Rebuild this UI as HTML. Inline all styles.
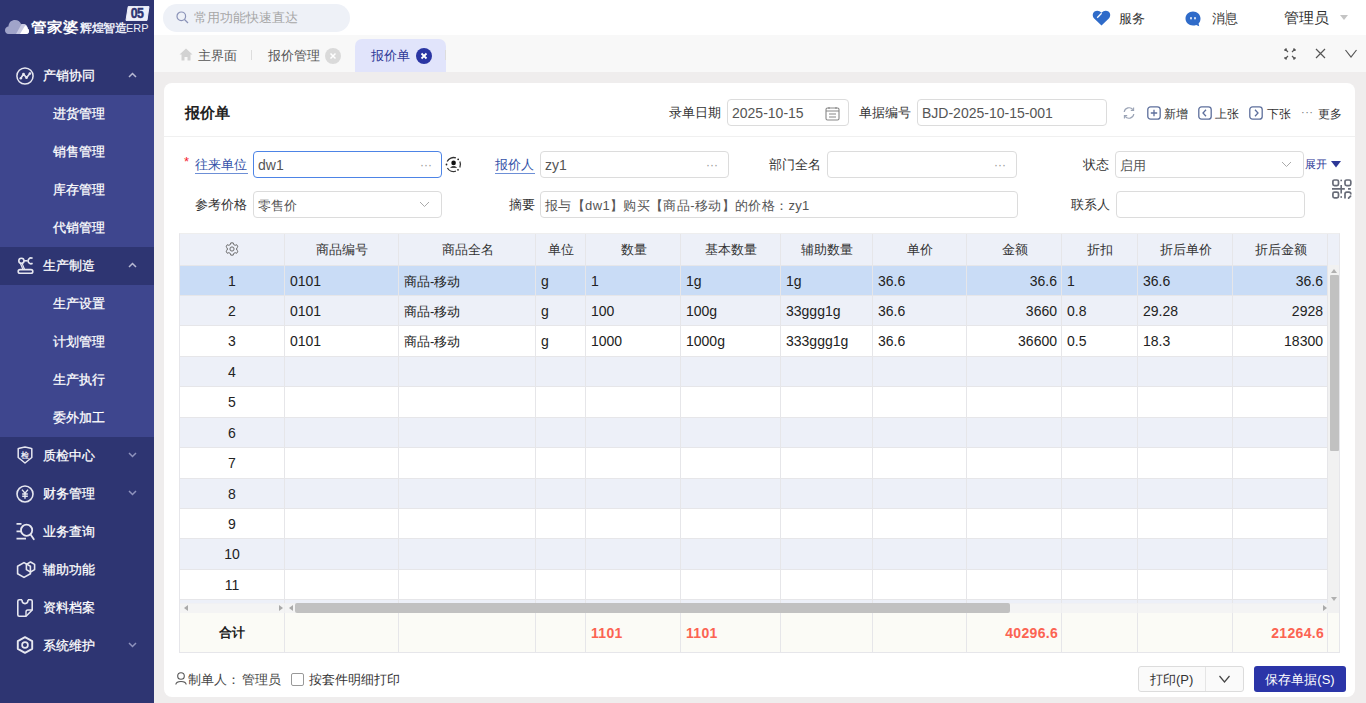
<!DOCTYPE html>
<html><head><meta charset="utf-8">
<style>
*{box-sizing:border-box;margin:0;padding:0}
html,body{width:1366px;height:703px;overflow:hidden}
body{position:relative;background:#efeded;font-family:"Liberation Sans",sans-serif;color:#333;font-size:13px}
.a{position:absolute}
#side{position:absolute;left:0;top:0;width:154px;height:703px;background:#2e3572}
.mh{position:absolute;left:0;width:154px;height:38px;color:#fff;font-size:13px;line-height:38px;-webkit-text-stroke:0.25px #fff}
.mh .t{position:absolute;left:43px;top:0}
.mh .ic{position:absolute;left:16px;top:10px;width:18px;height:18px}
.mh .ch{position:absolute;left:128px;top:15px;width:9px;height:6px}
.sub{position:absolute;left:0;width:154px;background:#3e468e}
.si{position:absolute;left:53px;width:80px;height:38px;line-height:38px;color:#fff;font-size:13px;-webkit-text-stroke:0.25px #fff}
#top{position:absolute;left:154px;top:0;width:1212px;height:35px;background:#fff}
#tabs{position:absolute;left:154px;top:35px;width:1212px;height:37px;background:#f8f8f8}
#card{position:absolute;left:164px;top:83px;width:1191px;height:614px;background:#fff;border-radius:8px}
.lbl{position:absolute;font-size:13px;color:#333;height:27px;line-height:27px;white-space:nowrap}
.inp{position:absolute;height:27px;border:1px solid #dcdcdc;border-radius:4px;background:#fff;font-size:14px;color:#555;line-height:27px;padding-left:4px;white-space:nowrap}
.dots{position:absolute;right:10px;top:0;color:#999;font-size:12px;letter-spacing:0px}
.thead{position:absolute;background:#edf0f8}
.rowbg{position:absolute}
.hl{position:absolute;height:1px;background:#e6e6e9}
.vl{position:absolute;width:1px;background:#e6e6e9}
.th{position:absolute;text-align:center;line-height:34px;font-size:13px;color:#333}
.td{position:absolute;line-height:31px;font-size:14px;color:#222;padding-left:5px;white-space:nowrap}
.td.c{text-align:center;padding-left:0}
.td.r{text-align:right;padding-right:5px;padding-left:0}
.td.cn{font-size:13px}
.tot{position:absolute;top:613px;height:39px;line-height:40px;font-weight:bold;color:#fb6352;font-size:14px;letter-spacing:0.3px}
</style></head><body>

<div id="side">
  <!-- logo -->
  <svg class="a" style="left:5px;top:19px" width="24" height="15" viewBox="0 0 24 15">
    <path d="M3.5 15 C1.2 15 0 13.3 0 11.3 C0 9 1.6 7.6 3.4 7.4 C3.8 3.2 6.6 1 10 1 C12.8 1 15.2 2.6 16.2 5.2 C16.8 5 17.4 4.9 18 4.9 C20.8 4.9 22.6 7 22.6 9.4 C23.5 10 24 11 24 12.2 C24 13.8 22.8 15 21 15 Z" fill="#a0a4c9"/>
    <path d="M11 15 L16.6 5.1 C17 5 17.5 4.9 18 4.9 C20.8 4.9 22.6 7 22.6 9.4 C23.5 10 24 11 24 12.2 C24 13.8 22.8 15 21 15 Z" fill="#c9cbe2"/>
    <path d="M15 15 L20.3 6.2 C21.7 7 22.6 8.2 22.6 9.4 C23.5 10 24 11 24 12.2 C24 13.8 22.8 15 21 15 Z" fill="#ffffff"/>
  </svg>
  <div class="a" style="left:31px;top:16.5px;color:#fff;font-size:15.5px;font-weight:bold;line-height:20px;transform:scaleY(0.9);transform-origin:center">管家婆</div>
  <div class="a" style="left:80px;top:21px;color:#eceef8;font-size:11.5px;font-weight:bold;line-height:14px;letter-spacing:-0.3px">辉煌智造</div>
  <div class="a" style="left:126px;top:21px;color:#eceef8;font-size:11.5px;line-height:14px;letter-spacing:0px;transform:scaleX(0.95);transform-origin:left">ERP</div>
  <svg class="a" style="left:125px;top:6px" width="25" height="15" viewBox="0 0 25 15"><path d="M3.2 0.6 H24 L22 14.4 H1 Z" fill="#eef0fa" stroke="#eef0fa" stroke-width="1" stroke-linejoin="round"/></svg>
  <div class="a" style="left:128px;top:5px;width:18px;height:16px;color:#2e3572;font-size:14px;font-weight:bold;line-height:16px;text-align:center;letter-spacing:-0.6px;transform:scaleX(0.88);-webkit-text-stroke:0.5px #2e3572">05</div>

  <div class="mh" style="top:57px">
    <svg class="ic" viewBox="0 0 18 18" style="left:16px;top:10px;width:18px;height:18px"><circle cx="9" cy="9" r="8.1" fill="none" stroke="#e6e7f0" stroke-width="1.5"/><path d="M4.8 11.2 L7.5 7 L10.5 10.8 L13.9 6.5" fill="none" stroke="#e6e7f0" stroke-width="1.6" stroke-linejoin="round" stroke-linecap="round"/><circle cx="4.8" cy="11.2" r="1.3" fill="#e6e7f0"/><circle cx="7.5" cy="7" r="1.3" fill="#e6e7f0"/><circle cx="10.5" cy="10.8" r="1.3" fill="#e6e7f0"/><circle cx="13.9" cy="6.5" r="1.3" fill="#e6e7f0"/></svg>
    <span class="t">产销协同</span>
    <svg class="ch" viewBox="0 0 9 6"><path d="M1 5 L4.5 1.5 L8 5" fill="none" stroke="#b7b9d2" stroke-width="1.5"/></svg>
  </div>
  <div class="sub" style="top:95px;height:152px">
    <div class="si" style="top:0">进货管理</div>
    <div class="si" style="top:38px">销售管理</div>
    <div class="si" style="top:76px">库存管理</div>
    <div class="si" style="top:114px">代销管理</div>
  </div>
  <div class="mh" style="top:247px">
    <svg class="ic" viewBox="0 0 17 17" style="left:17px;top:10px;width:17px;height:17px"><circle cx="4.4" cy="3.8" r="2.6" fill="none" stroke="#e6e7f0" stroke-width="1.6"/><path d="M7 3.8 H10.5" stroke="#e6e7f0" stroke-width="1.6"/><path d="M15.6 1.4 A2.9 2.9 0 1 0 15.6 6.3" fill="none" stroke="#e6e7f0" stroke-width="1.6"/><path d="M5 6.3 L7.6 12.6 M3.4 6.6 L6 12.6" stroke="#e6e7f0" stroke-width="1.2"/><rect x="1.2" y="12.6" width="14.6" height="3.6" rx="1.8" fill="none" stroke="#e6e7f0" stroke-width="1.6"/></svg>
    <span class="t">生产制造</span>
    <svg class="ch" viewBox="0 0 9 6"><path d="M1 5 L4.5 1.5 L8 5" fill="none" stroke="#b7b9d2" stroke-width="1.5"/></svg>
  </div>
  <div class="sub" style="top:285px;height:152px">
    <div class="si" style="top:0">生产设置</div>
    <div class="si" style="top:38px">计划管理</div>
    <div class="si" style="top:76px">生产执行</div>
    <div class="si" style="top:114px">委外加工</div>
  </div>
  <div class="mh" style="top:437px">
    <svg class="ic" viewBox="0 0 18 18" style="left:16px;top:9px;width:18px;height:18px"><path d="M2.2 2.6 C5 1.8 6.8 1.2 9 1 C11.2 1.2 13 1.8 15.8 2.6 V11.5 L9 17 L2.2 11.5 Z" fill="none" stroke="#e6e7f0" stroke-width="1.5" stroke-linejoin="round"/><text x="9" y="11.6" font-size="7.5" text-anchor="middle" fill="#e6e7f0" font-weight="bold">检</text></svg>
    <span class="t">质检中心</span>
    <svg class="ch" viewBox="0 0 9 6"><path d="M1 1 L4.5 4.5 L8 1" fill="none" stroke="#8f93bd" stroke-width="1.5"/></svg>
  </div>
  <div class="mh" style="top:475px">
    <svg class="ic" viewBox="0 0 18 18" style="left:16px;top:10px;width:18px;height:18px"><circle cx="9" cy="9" r="8" fill="none" stroke="#e6e7f0" stroke-width="1.6"/><path d="M6 4.6 L9 8.2 L12 4.6 M9 8.2 V13.8 M6.2 9 H11.8 M6.2 11.3 H11.8" fill="none" stroke="#e6e7f0" stroke-width="1.4"/></svg>
    <span class="t">财务管理</span>
    <svg class="ch" viewBox="0 0 9 6"><path d="M1 1 L4.5 4.5 L8 1" fill="none" stroke="#8f93bd" stroke-width="1.5"/></svg>
  </div>
  <div class="mh" style="top:513px">
    <svg class="ic" viewBox="0 0 19 19" style="left:16px;top:9px;width:19px;height:19px"><path d="M0.5 1.8 H5.5 M0.5 9.3 H5 M0.5 16.6 H10" stroke="#e6e7f0" stroke-width="1.7"/><circle cx="10.6" cy="8.2" r="5.6" fill="none" stroke="#e6e7f0" stroke-width="1.8"/><path d="M14.6 12.4 L17.8 17.2" stroke="#e6e7f0" stroke-width="1.8" stroke-linecap="round"/></svg>
    <span class="t">业务查询</span>
  </div>
  <div class="mh" style="top:551px">
    <svg class="ic" viewBox="0 0 20 18" style="left:16px;top:10px;width:20px;height:18px"><path d="M8 1.6 L14.4 5.3 V12.7 L8 16.4 L1.6 12.7 V5.3 Z" fill="none" stroke="#e6e7f0" stroke-width="1.6" stroke-linejoin="round"/><path d="M14.5 1 L18.6 3.4 V8.6 L14.5 11 L10.4 8.6 V3.4 Z" fill="none" stroke="#e6e7f0" stroke-width="1.6" stroke-linejoin="round"/></svg>
    <span class="t">辅助功能</span>
  </div>
  <div class="mh" style="top:589px">
    <svg class="ic" viewBox="0 0 17 18" style="left:17px;top:10px;width:17px;height:18px"><path d="M5 0.8 H2.2 C1.4 0.8 0.8 1.4 0.8 2.2 V15.8 C0.8 16.6 1.4 17.2 2.2 17.2 H9 L15.2 11 V2.2 C15.2 1.4 14.6 0.8 13.8 0.8 H11" fill="none" stroke="#e6e7f0" stroke-width="1.6" stroke-linejoin="round"/><path d="M5 0.8 C5 3.5 6.3 4.6 8 4.6 C9.7 4.6 11 3.5 11 0.8" fill="none" stroke="#e6e7f0" stroke-width="1.6"/><path d="M9 17.2 V13 C9 12.2 9.6 11 10.8 11 H15.2" fill="none" stroke="#e6e7f0" stroke-width="1.4"/></svg>
    <span class="t">资料档案</span>
  </div>
  <div class="mh" style="top:627px">
    <svg class="ic" viewBox="0 0 18 18" style="left:16px;top:9px;width:18px;height:18px"><path d="M9 1.2 L16.2 5.2 V12.8 L9 16.8 L1.8 12.8 V5.2 Z" fill="none" stroke="#e6e7f0" stroke-width="1.9" stroke-linejoin="round"/><circle cx="9" cy="9" r="2.9" fill="none" stroke="#e6e7f0" stroke-width="1.7"/></svg>
    <span class="t">系统维护</span>
    <svg class="ch" viewBox="0 0 9 6"><path d="M1 1 L4.5 4.5 L8 1" fill="none" stroke="#8f93bd" stroke-width="1.5"/></svg>
  </div>
</div>

<div id="top">
  <div class="a" style="left:9px;top:4px;width:187px;height:28px;border-radius:14px;background:#eef1f7"></div>
  <svg class="a" style="left:22px;top:11px" width="13" height="13" viewBox="0 0 13 13"><circle cx="5.3" cy="5.3" r="4.3" fill="none" stroke="#8b93b8" stroke-width="1.2"/><path d="M8.5 8.5 L12 12" stroke="#8b93b8" stroke-width="1.3"/></svg>
  <div class="a" style="left:40px;top:9px;font-size:13px;color:#a7a7a7;line-height:18px">常用功能快速直达</div>
  <svg class="a" style="left:938px;top:10px" width="19" height="16" viewBox="0 0 19 16"><path d="M9.5 15.5 L2.2 8.6 C0.2 6.6 0.3 3.2 2.5 1.6 C4.8 0 7.6 0.6 9.5 2.8 C11.4 0.6 14.2 0 16.5 1.6 C18.7 3.2 18.8 6.6 16.8 8.6 Z" fill="#2f6bc9"/><path d="M5.2 7.8 L9.6 3.2" stroke="#fff" stroke-width="1.3"/></svg>
  <div class="a" style="left:965px;top:10px;font-size:13px;color:#333;line-height:18px">服务</div>
  <svg class="a" style="left:1031px;top:11px" width="16" height="16" viewBox="0 0 16 16"><path d="M8 0.5 C12.2 0.5 15.5 3.6 15.5 7.5 C15.5 9.6 14.8 11.4 13.6 12.6 L14.2 15.3 L11.2 14 C10.2 14.4 9.1 14.5 8 14.5 C3.8 14.5 0.5 11.4 0.5 7.5 C0.5 3.6 3.8 0.5 8 0.5 Z" fill="#2f6bc9"/><rect x="5.2" y="6" width="1.6" height="2.6" rx=".8" fill="#fff"/><rect x="9.2" y="6" width="1.6" height="2.6" rx=".8" fill="#fff"/></svg>
  <div class="a" style="left:1058px;top:10px;font-size:13px;color:#333;line-height:18px">消息</div>
  <div class="a" style="left:1072px;top:10px;width:1px;height:16px;background:#aaa"></div>
  <div class="a" style="left:1130px;top:8px;font-size:15px;color:#333;line-height:20px">管理员</div>
  <svg class="a" style="left:1186px;top:15px" width="8" height="5" viewBox="0 0 8 5"><path d="M0 0 H8 L4 5 Z" fill="#c4c4c4"/></svg>
</div>

<div id="tabs">
  <svg class="a" style="left:25px;top:13px" width="14" height="13" viewBox="0 0 14 13"><path d="M7 0.5 L0.5 6.5 H2.5 V12.5 H5.5 V9 H8.5 V12.5 H11.5 V6.5 H13.5 Z" fill="#d2d2d2"/></svg>
  <div class="a" style="left:44px;top:11px;font-size:13px;color:#555;line-height:19px">主界面</div>
  <div class="a" style="left:97px;top:15px;width:1px;height:10px;background:#ddd"></div>
  <div class="a" style="left:114px;top:11px;font-size:13px;color:#555;line-height:19px">报价管理</div>
  <svg class="a" style="left:171px;top:13px" width="16" height="16" viewBox="0 0 16 16"><circle cx="8" cy="8" r="8" fill="#dadada"/><path d="M5.5 5.5 L10.5 10.5 M10.5 5.5 L5.5 10.5" stroke="#fff" stroke-width="1.5"/></svg>
  <div class="a" style="left:201px;top:15px;width:1px;height:10px;background:#ddd"></div>
  <div class="a" style="left:201px;top:4px;width:91px;height:33px;background:#e1e4fb;border-radius:7px 7px 0 0"></div>
  <div class="a" style="left:217px;top:11px;font-size:13px;color:#2c3796;line-height:19px">报价单</div>
  <svg class="a" style="left:262px;top:13px" width="16" height="16" viewBox="0 0 16 16"><circle cx="8" cy="8" r="8" fill="#2a35a3"/><path d="M5.5 5.5 L10.5 10.5 M10.5 5.5 L5.5 10.5" stroke="#fff" stroke-width="1.8"/></svg>
  <div class="a" style="left:291px;top:15px;width:1px;height:10px;background:#ddd"></div>
  <svg class="a" style="left:1130px;top:13px" width="12" height="12" viewBox="0 0 12 12"><path d="M1 1 L4 4 M1 1 V3 M1 1 H3 M11 1 L8 4 M11 1 V3 M11 1 H9 M1 11 L4 8 M1 11 V9 M1 11 H3 M11 11 L8 8 M11 11 V9 M11 11 H9" stroke="#555" stroke-width="1.2" fill="none"/></svg>
  <svg class="a" style="left:1161px;top:13px" width="11" height="11" viewBox="0 0 11 11"><path d="M1 1 L10 10 M10 1 L1 10" stroke="#555" stroke-width="1.2"/></svg>
  <svg class="a" style="left:1191px;top:14px" width="12" height="9" viewBox="0 0 12 9"><path d="M0.5 1 L6 8 L11.5 1" stroke="#555" stroke-width="1.2" fill="none"/></svg>
</div>

<!-- card -->
<div id="card"></div>
<div class="a" style="left:164px;top:136px;width:1191px;height:1px;background:#f0f0f0"></div>
<div class="a" style="left:185px;top:103px;font-size:15px;font-weight:bold;color:#222;line-height:20px">报价单</div>

<div class="lbl" style="left:669px;top:99px">录单日期</div>
<div class="inp" style="left:727px;top:99px;width:122px">2025-10-15
  <svg class="a" style="left:97px;top:6px" width="15" height="15" viewBox="0 0 15 15"><rect x="1" y="2" width="13" height="12" rx="1.5" fill="none" stroke="#888" stroke-width="1.1"/><path d="M4 1 V3 M11 1 V3 M1 5 H14 M4 8 H11 M4 11 H11" stroke="#888" stroke-width="1.1"/></svg>
</div>
<div class="lbl" style="left:859px;top:99px">单据编号</div>
<div class="inp" style="left:917px;top:99px;width:190px">BJD-2025-10-15-001</div>
<svg class="a" style="left:1122px;top:106px" width="14" height="14" viewBox="0 0 14 14"><path d="M2.2 6 A5 5 0 0 1 11 3.6" fill="none" stroke="#9aa3b5" stroke-width="1.2"/><path d="M11.8 8 A5 5 0 0 1 3 10.4" fill="none" stroke="#9aa3b5" stroke-width="1.2"/><path d="M11.6 1.6 V4.4 H8.8" fill="none" stroke="#9aa3b5" stroke-width="1.1"/><path d="M2.4 12.4 V9.6 H5.2" fill="none" stroke="#9aa3b5" stroke-width="1.1"/></svg>
<svg class="a" style="left:1147px;top:106px" width="14" height="14" viewBox="0 0 14 14"><rect x="0.8" y="0.8" width="12.4" height="12.4" rx="2.8" fill="none" stroke="#5d6f9c" stroke-width="1.3"/><path d="M7 3.8 V10.2 M3.8 7 H10.2" stroke="#5d6f9c" stroke-width="1.3"/></svg>
<div class="a" style="left:1164px;top:106px;font-size:11.5px;color:#333;line-height:16px">新增</div>
<svg class="a" style="left:1198px;top:106px" width="14" height="14" viewBox="0 0 14 14"><rect x="0.8" y="0.8" width="12.4" height="12.4" rx="2.8" fill="none" stroke="#5d6f9c" stroke-width="1.3"/><path d="M8 3.8 L5 7 L8 10.2" fill="none" stroke="#5d6f9c" stroke-width="1.3"/></svg>
<div class="a" style="left:1215px;top:106px;font-size:11.5px;color:#333;line-height:16px">上张</div>
<svg class="a" style="left:1249px;top:106px" width="14" height="14" viewBox="0 0 14 14"><rect x="0.8" y="0.8" width="12.4" height="12.4" rx="2.8" fill="none" stroke="#5d6f9c" stroke-width="1.3"/><path d="M6 3.8 L9 7 L6 10.2" fill="none" stroke="#5d6f9c" stroke-width="1.3"/></svg>
<div class="a" style="left:1267px;top:106px;font-size:11.5px;color:#333;line-height:16px">下张</div>
<div class="a" style="left:1301px;top:104px;font-size:11px;color:#777;line-height:16px;letter-spacing:0.5px">···</div>
<div class="a" style="left:1318px;top:106px;font-size:11.5px;color:#333;line-height:16px">更多</div>

<!-- form row 1 -->
<div class="a" style="left:184px;top:155px;color:#f5222d;font-size:13px;line-height:13px">*</div>
<div class="lbl" style="left:195px;top:151px;color:#3352a8">往来单位</div>
<div class="a" style="left:195px;top:173px;width:53px;height:1px;background:#6d8fd6"></div>
<div class="inp" style="left:253px;top:151px;width:189px;border:1.5px solid #4d84e6;line-height:26px">dw1<span class="dots" style="right:9px">···</span></div>
<svg class="a" style="left:445px;top:156px" width="17" height="17" viewBox="0 0 17 17"><path d="M2.16 5.54 A7.0 7.0 0 0 1 10.89 1.92 M14.84 5.54 A7.0 7.0 0 0 1 14.84 11.46 M10.89 15.08 A7.0 7.0 0 0 1 2.44 12.00" fill="none" stroke="#333" stroke-width="1.3"/><circle cx="13.18" cy="3.30" r="0.9" fill="#222"/><circle cx="13.00" cy="13.86" r="0.9" fill="#222"/><circle cx="1.50" cy="8.50" r="0.9" fill="#222"/><circle cx="8.6" cy="6.9" r="2.3" fill="#111"/><path d="M5.2 11.8 C5.6 9.6 11.6 9.6 12 11.8 Z" fill="#111"/></svg>
<div class="lbl" style="left:495px;top:151px;color:#3352a8">报价人</div>
<div class="a" style="left:495px;top:173px;width:40px;height:1px;background:#6d8fd6"></div>
<div class="inp" style="left:540px;top:151px;width:189px">zy1<span class="dots">···</span></div>
<div class="lbl" style="left:769px;top:151px">部门全名</div>
<div class="inp" style="left:827px;top:151px;width:190px"><span class="dots">···</span></div>
<div class="lbl" style="left:1083px;top:151px">状态</div>
<div class="inp" style="left:1115px;top:151px;width:189px;font-size:13px">启用
  <svg class="a" style="left:165px;top:9px" width="11" height="7" viewBox="0 0 11 7"><path d="M1 1 L5.5 5.5 L10 1" fill="none" stroke="#aaa" stroke-width="1"/></svg>
</div>
<div class="a" style="left:1305px;top:156px;font-size:11px;color:#2c3796;line-height:16px">展开</div>
<svg class="a" style="left:1331px;top:161px" width="10" height="7" viewBox="0 0 10 7"><path d="M0 0 H10 L5 6.5 Z" fill="#2c3796"/></svg>
<svg class="a" style="left:1326px;top:174px" width="30" height="30" viewBox="0 0 30 30"><rect x="6.9" y="6" width="5.6" height="5.6" rx="1.6" fill="none" stroke="#686c78" stroke-width="1.7"/><rect x="19" y="6" width="5.8" height="5.6" rx="1.6" fill="none" stroke="#686c78" stroke-width="1.7"/><rect x="6.9" y="18.2" width="5.6" height="5.6" rx="1.6" fill="none" stroke="#686c78" stroke-width="1.7"/><circle cx="15.2" cy="6.4" r="0.9" fill="#686c78"/><circle cx="15.2" cy="23" r="0.9" fill="#686c78"/><path d="M6 14.9 H18.8 M15.2 11 V19.4 M22 14.9 H24.8" stroke="#686c78" stroke-width="1.6"/><path d="M19 24.5 V20 C19 18.8 19.6 18.2 20.8 18.2 H23 C24.2 18.2 24.8 18.8 24.8 20 V20.5" fill="none" stroke="#686c78" stroke-width="1.7"/><path d="M22.6 24.2 L24.6 22.2" stroke="#686c78" stroke-width="1.7" stroke-linecap="round"/></svg>

<!-- form row 2 -->
<div class="lbl" style="left:195px;top:191px">参考价格</div>
<div class="inp" style="left:253px;top:191px;width:189px;font-size:13px">零售价
  <svg class="a" style="left:165px;top:9px" width="11" height="7" viewBox="0 0 11 7"><path d="M1 1 L5.5 5.5 L10 1" fill="none" stroke="#aaa" stroke-width="1"/></svg>
</div>
<div class="lbl" style="left:509px;top:191px">摘要</div>
<div class="inp" style="left:540px;top:191px;width:478px;font-size:13px;letter-spacing:0.36px">报与【dw1】购买【商品-移动】的价格：zy1</div>
<div class="lbl" style="left:1071px;top:191px">联系人</div>
<div class="inp" style="left:1116px;top:191px;width:189px"></div>

<!-- table -->
<div class="a" style="left:179px;top:233px;width:1161px;height:420px;border:1px solid #e6e6ea;border-top-color:#eeeeee"></div>
<div class="thead" style="left:180px;top:234px;width:1159px;height:31px"></div>
<div class="rowbg" style="top:265px;height:30px;left:180px;width:1148px;background:#c9dcf6"></div>
<div class="rowbg" style="top:295px;height:30px;left:180px;width:1148px;background:#edf0f8"></div>
<div class="rowbg" style="top:325px;height:31px;left:180px;width:1148px;background:#ffffff"></div>
<div class="rowbg" style="top:356px;height:30px;left:180px;width:1148px;background:#edf0f8"></div>
<div class="rowbg" style="top:386px;height:31px;left:180px;width:1148px;background:#ffffff"></div>
<div class="rowbg" style="top:417px;height:30px;left:180px;width:1148px;background:#edf0f8"></div>
<div class="rowbg" style="top:447px;height:31px;left:180px;width:1148px;background:#ffffff"></div>
<div class="rowbg" style="top:478px;height:30px;left:180px;width:1148px;background:#edf0f8"></div>
<div class="rowbg" style="top:508px;height:30px;left:180px;width:1148px;background:#ffffff"></div>
<div class="rowbg" style="top:538px;height:31px;left:180px;width:1148px;background:#edf0f8"></div>
<div class="rowbg" style="top:569px;height:30px;left:180px;width:1148px;background:#ffffff"></div>
<div class="rowbg" style="top:599px;height:5px;left:180px;width:1148px;background:#edf0f8"></div>
<div class="rowbg" style="top:613px;height:39px;left:180px;width:1159px;background:#fbfbf6"></div>
<div class="hl" style="top:295px;left:180px;width:1148px"></div>
<div class="hl" style="top:325px;left:180px;width:1148px"></div>
<div class="hl" style="top:356px;left:180px;width:1148px"></div>
<div class="hl" style="top:386px;left:180px;width:1148px"></div>
<div class="hl" style="top:417px;left:180px;width:1148px"></div>
<div class="hl" style="top:447px;left:180px;width:1148px"></div>
<div class="hl" style="top:478px;left:180px;width:1148px"></div>
<div class="hl" style="top:508px;left:180px;width:1148px"></div>
<div class="hl" style="top:538px;left:180px;width:1148px"></div>
<div class="hl" style="top:569px;left:180px;width:1148px"></div>
<div class="hl" style="top:599px;left:180px;width:1148px"></div>
<div class="hl" style="top:265px;left:180px;width:1159px"></div>
<div class="vl" style="left:284px;top:234px;height:418px"></div>
<div class="vl" style="left:398px;top:234px;height:418px"></div>
<div class="vl" style="left:535px;top:234px;height:418px"></div>
<div class="vl" style="left:585px;top:234px;height:418px"></div>
<div class="vl" style="left:680px;top:234px;height:418px"></div>
<div class="vl" style="left:780px;top:234px;height:418px"></div>
<div class="vl" style="left:872px;top:234px;height:418px"></div>
<div class="vl" style="left:966px;top:234px;height:418px"></div>
<div class="vl" style="left:1061px;top:234px;height:418px"></div>
<div class="vl" style="left:1137px;top:234px;height:418px"></div>
<div class="vl" style="left:1232px;top:234px;height:418px"></div>
<div class="vl" style="left:1327px;top:234px;height:418px"></div>
<div class="a" style="left:1328px;top:265px;width:11px;height:348px;background:#f1f1f1"></div>
<svg class="a" style="left:1331px;top:269px" width="6" height="4" viewBox="0 0 6 4"><path d="M0 4 L3 0 L6 4 Z" fill="#b0b0b0"/></svg>
<div class="a" style="left:1330px;top:275px;width:9px;height:176px;background:#c1c1c1;border-radius:1px"></div>
<svg class="a" style="left:1331px;top:597px" width="6" height="4" viewBox="0 0 6 4"><path d="M0 0 L3 4 L6 0 Z" fill="#b0b0b0"/></svg>
<div class="a" style="left:180px;top:603px;width:1148px;height:10px;background:rgba(241,241,241,0.8)"></div>
<svg class="a" style="left:184px;top:605px" width="4" height="6" viewBox="0 0 4 6"><path d="M4 0 L0 3 L4 6 Z" fill="#aaa"/></svg>
<svg class="a" style="left:279px;top:605px" width="4" height="6" viewBox="0 0 4 6"><path d="M0 0 L4 3 L0 6 Z" fill="#aaa"/></svg>
<svg class="a" style="left:289px;top:605px" width="4" height="6" viewBox="0 0 4 6"><path d="M4 0 L0 3 L4 6 Z" fill="#aaa"/></svg>
<div class="a" style="left:295px;top:603px;width:715px;height:10px;background:#c1c1c1;border-radius:2px"></div>
<svg class="a" style="left:1323px;top:605px" width="4" height="6" viewBox="0 0 4 6"><path d="M0 0 L4 3 L0 6 Z" fill="#aaa"/></svg>
<svg class="a" style="left:225px;top:242px" width="14" height="14" viewBox="0 0 16 16"><path d="M6.6 1 H9.4 L9.9 2.9 L11.6 3.8 L13.4 3.1 L14.8 5.5 L13.4 6.8 V9.2 L14.8 10.5 L13.4 12.9 L11.6 12.2 L9.9 13.1 L9.4 15 H6.6 L6.1 13.1 L4.4 12.2 L2.6 12.9 L1.2 10.5 L2.6 9.2 V6.8 L1.2 5.5 L2.6 3.1 L4.4 3.8 L6.1 2.9 Z" fill="none" stroke="#666" stroke-width="1.1" stroke-linejoin="round"/><circle cx="8" cy="8" r="2.4" fill="none" stroke="#666" stroke-width="1.1"/></svg>
<div class="th" style="left:285px;width:114px;top:233px;height:32px">商品编号</div>
<div class="th" style="left:399px;width:137px;top:233px;height:32px">商品全名</div>
<div class="th" style="left:536px;width:50px;top:233px;height:32px">单位</div>
<div class="th" style="left:586px;width:95px;top:233px;height:32px">数量</div>
<div class="th" style="left:681px;width:100px;top:233px;height:32px">基本数量</div>
<div class="th" style="left:781px;width:92px;top:233px;height:32px">辅助数量</div>
<div class="th" style="left:873px;width:94px;top:233px;height:32px">单价</div>
<div class="th" style="left:967px;width:95px;top:233px;height:32px">金额</div>
<div class="th" style="left:1062px;width:76px;top:233px;height:32px">折扣</div>
<div class="th" style="left:1138px;width:95px;top:233px;height:32px">折后单价</div>
<div class="th" style="left:1233px;width:95px;top:233px;height:32px">折后金额</div>
<div class="td c" style="left:179px;width:106px;top:266px;height:29px">1</div>
<div class="td" style="left:285px;width:114px;top:266px;height:29px">0101</div>
<div class="td cn" style="left:399px;width:137px;top:266px;height:29px">商品-移动</div>
<div class="td" style="left:536px;width:50px;top:266px;height:29px">g</div>
<div class="td" style="left:586px;width:95px;top:266px;height:29px">1</div>
<div class="td" style="left:681px;width:100px;top:266px;height:29px">1g</div>
<div class="td" style="left:781px;width:92px;top:266px;height:29px">1g</div>
<div class="td" style="left:873px;width:94px;top:266px;height:29px">36.6</div>
<div class="td r" style="left:967px;width:95px;top:266px;height:29px">36.6</div>
<div class="td" style="left:1062px;width:76px;top:266px;height:29px">1</div>
<div class="td" style="left:1138px;width:95px;top:266px;height:29px">36.6</div>
<div class="td r" style="left:1233px;width:95px;top:266px;height:29px">36.6</div>
<div class="td c" style="left:179px;width:106px;top:296px;height:29px">2</div>
<div class="td" style="left:285px;width:114px;top:296px;height:29px">0101</div>
<div class="td cn" style="left:399px;width:137px;top:296px;height:29px">商品-移动</div>
<div class="td" style="left:536px;width:50px;top:296px;height:29px">g</div>
<div class="td" style="left:586px;width:95px;top:296px;height:29px">100</div>
<div class="td" style="left:681px;width:100px;top:296px;height:29px">100g</div>
<div class="td" style="left:781px;width:92px;top:296px;height:29px">33ggg1g</div>
<div class="td" style="left:873px;width:94px;top:296px;height:29px">36.6</div>
<div class="td r" style="left:967px;width:95px;top:296px;height:29px">3660</div>
<div class="td" style="left:1062px;width:76px;top:296px;height:29px">0.8</div>
<div class="td" style="left:1138px;width:95px;top:296px;height:29px">29.28</div>
<div class="td r" style="left:1233px;width:95px;top:296px;height:29px">2928</div>
<div class="td c" style="left:179px;width:106px;top:326px;height:30px">3</div>
<div class="td" style="left:285px;width:114px;top:326px;height:30px">0101</div>
<div class="td cn" style="left:399px;width:137px;top:326px;height:30px">商品-移动</div>
<div class="td" style="left:536px;width:50px;top:326px;height:30px">g</div>
<div class="td" style="left:586px;width:95px;top:326px;height:30px">1000</div>
<div class="td" style="left:681px;width:100px;top:326px;height:30px">1000g</div>
<div class="td" style="left:781px;width:92px;top:326px;height:30px">333ggg1g</div>
<div class="td" style="left:873px;width:94px;top:326px;height:30px">36.6</div>
<div class="td r" style="left:967px;width:95px;top:326px;height:30px">36600</div>
<div class="td" style="left:1062px;width:76px;top:326px;height:30px">0.5</div>
<div class="td" style="left:1138px;width:95px;top:326px;height:30px">18.3</div>
<div class="td r" style="left:1233px;width:95px;top:326px;height:30px">18300</div>
<div class="td c" style="left:179px;width:106px;top:357px;height:29px">4</div>
<div class="td c" style="left:179px;width:106px;top:387px;height:30px">5</div>
<div class="td c" style="left:179px;width:106px;top:418px;height:29px">6</div>
<div class="td c" style="left:179px;width:106px;top:448px;height:30px">7</div>
<div class="td c" style="left:179px;width:106px;top:479px;height:29px">8</div>
<div class="td c" style="left:179px;width:106px;top:509px;height:29px">9</div>
<div class="td c" style="left:179px;width:106px;top:539px;height:30px">10</div>
<div class="td c" style="left:179px;width:106px;top:570px;height:29px">11</div>
<div class="tot" style="left:179px;width:106px;text-align:center;color:#222;font-size:13px;letter-spacing:0">合计</div>
<div class="tot" style="left:591px">1101</div>
<div class="tot" style="left:686px">1101</div>
<div class="tot" style="left:967px;width:91px;text-align:right;padding-right:0px">40296.6</div>
<div class="tot" style="left:1233px;width:91px;text-align:right">21264.6</div>
<!-- footer -->
<svg class="a" style="left:175px;top:672px" width="12" height="13" viewBox="0 0 12 13"><circle cx="6" cy="4" r="3.3" fill="none" stroke="#555" stroke-width="1.1"/><path d="M0.8 12.5 C1.3 8.5 10.7 8.5 11.2 12.5" fill="none" stroke="#555" stroke-width="1.1"/></svg>
<div class="a" style="left:188px;top:670px;font-size:13px;color:#444;line-height:19px">制单人：</div><div class="a" style="left:242px;top:670px;font-size:13px;color:#444;line-height:19px">管理员</div>
<div class="a" style="left:291px;top:673px;width:13px;height:13px;border:1px solid #999;border-radius:2px;background:#fff"></div>
<div class="a" style="left:309px;top:670px;font-size:13px;color:#333;line-height:19px">按套件明细打印</div>
<div class="a" style="left:1138px;top:666px;width:106px;height:26px;border:1px solid #dcdcdc;border-radius:3px;background:#fafafa"></div>
<div class="a" style="left:1205px;top:667px;width:1px;height:24px;background:#e5e5e5"></div>
<div class="a" style="left:1150px;top:670px;font-size:13px;color:#333;line-height:19px">打印(P)</div>
<svg class="a" style="left:1219px;top:675px" width="11" height="8" viewBox="0 0 11 8"><path d="M0.5 1 L5.5 7 L10.5 1" fill="none" stroke="#444" stroke-width="1.2"/></svg>
<div class="a" style="left:1254px;top:666px;width:92px;height:26px;border-radius:3px;background:#2b35a8"></div>
<div class="a" style="left:1254px;top:670px;width:92px;text-align:center;font-size:13px;color:#fff;line-height:19px">保存单据(S)</div>

</body></html>
